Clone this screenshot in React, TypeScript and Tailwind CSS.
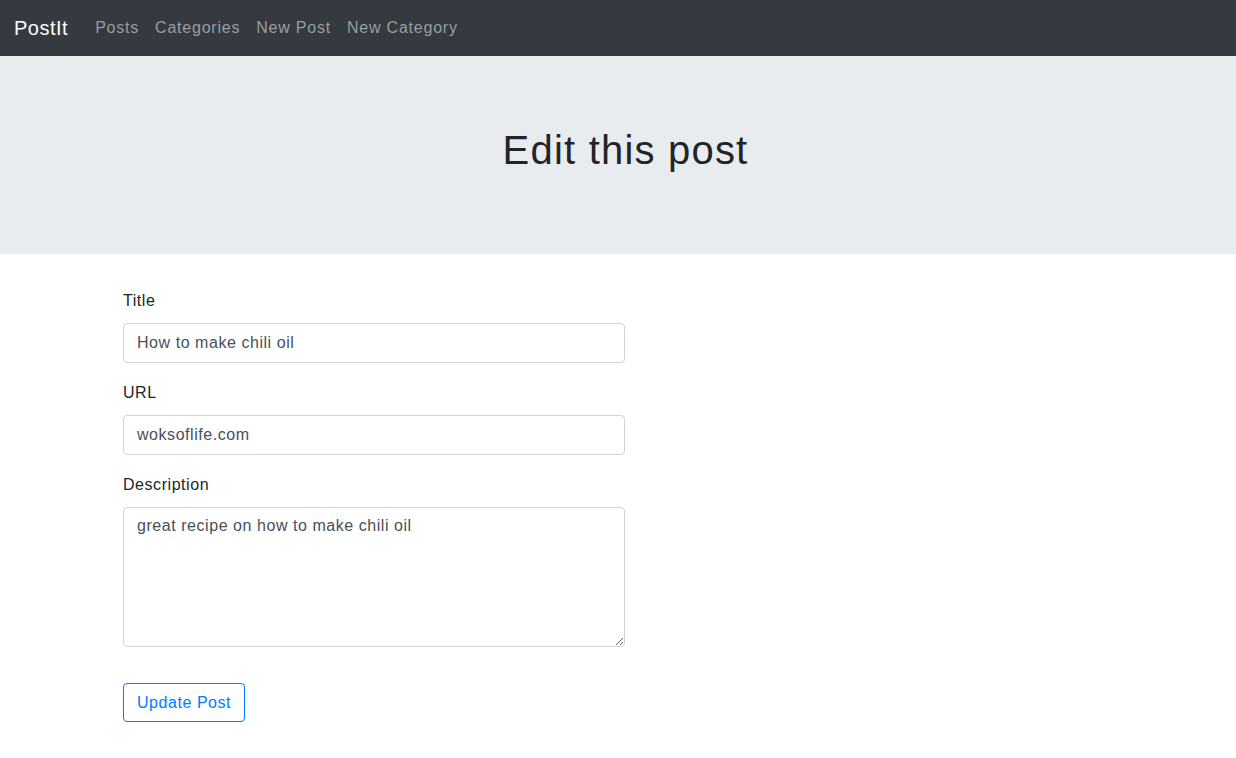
import React from "react";

export default function App() {
  const font = { fontFamily: '"Liberation Sans", Arial, sans-serif' };
  return (
    <div className="min-h-[758px] bg-white text-[#212529] tracking-[0.55px]" style={font}>
      <nav className="h-[56px] bg-[#343a40] flex items-center pl-[14px] pr-4">
        <span className="text-[20px] leading-[30px] text-white mr-[19px] tracking-[0.5px]">PostIt</span>
        <div className="flex items-center">
          {["Posts", "Categories", "New Post", "New Category"].map((l) => (
            <a key={l} className="px-2 text-[16px] leading-[24px] text-[#9a9da0] cursor-pointer tracking-[0.78px]">
              {l}
            </a>
          ))}
        </div>
      </nav>
      <div className="h-[198px] bg-[#e9ecef] pt-[70px] pl-[15px]">
        <h1 className="text-center text-[40px] leading-[48px] font-normal text-[#212529] tracking-[1.2px]">Edit this post</h1>
      </div>
      <form className="w-[502px] ml-[123px] pt-[35px]" onSubmit={(e) => e.preventDefault()}>
        <label className="block text-[16px] leading-[24px] mb-[10px]">Title</label>
        <input
          defaultValue="How to make chili oil"
          className="block w-full h-[40px] pl-[13px] pr-3 border border-[#ced4da] rounded-[4px] text-[16px] leading-[24px] text-[#495057] outline-none mb-[18px]"
        />
        <label className="block text-[16px] leading-[24px] mb-[10px]">URL</label>
        <input
          defaultValue="woksoflife.com"
          className="block w-full h-[40px] pl-[13px] pr-3 border border-[#ced4da] rounded-[4px] text-[16px] leading-[24px] text-[#495057] outline-none mb-[18px]"
        />
        <label className="block text-[16px] leading-[24px] mb-[10px]">Description</label>
        <textarea
          defaultValue="great recipe on how to make chili oil"
          className="block w-full h-[140px] pl-[13px] pr-3 py-[6px] border border-[#ced4da] rounded-[4px] text-[16px] leading-[24px] text-[#495057] outline-none resize-y"
        />
        <button
          type="submit"
          className="mt-[36px] h-[39px] px-[13px] border border-[#007bff] rounded-[4px] text-[16px] leading-[24px] text-[#007bff] bg-white"
        >
          Update Post
        </button>
      </form>
    </div>
  );
}
